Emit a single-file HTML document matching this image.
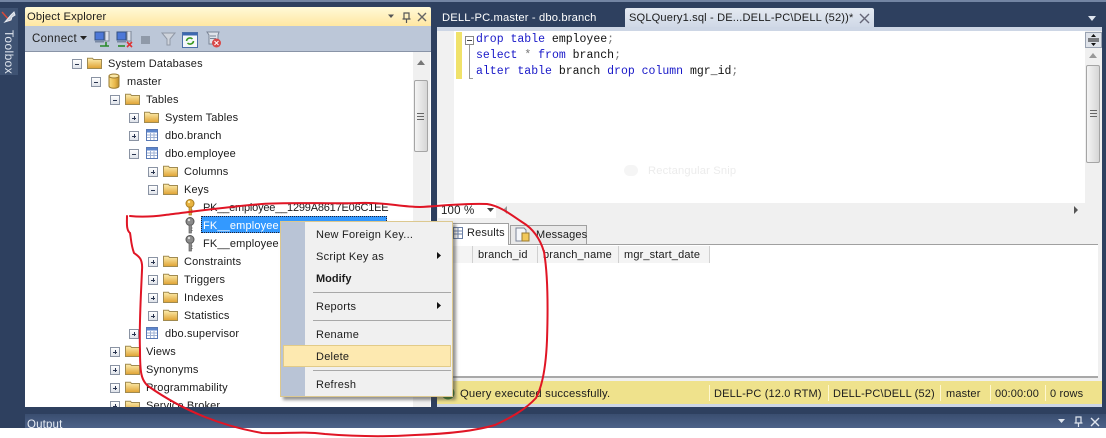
<!DOCTYPE html>
<html><head><meta charset="utf-8">
<style>
html,body{margin:0;padding:0}
body{width:1106px;height:438px;overflow:hidden;position:relative;background:#fff;font:11px/14px "Liberation Sans",sans-serif;color:#1c1c1c}
#a{position:absolute;left:0;top:0;width:1106px;height:428px;background:#2e405f;overflow:hidden;filter:blur(.3px)}
.b{position:absolute}
.t{position:absolute;white-space:nowrap;line-height:14px;letter-spacing:.15px;margin-top:1px}
.e{position:absolute;width:8px;height:8px;border:1px solid #8a93a3;background:linear-gradient(#fff,#dfe3ea);margin-top:1px}
.e:before{content:"";position:absolute;left:2px;top:3.500px;width:4px;height:1px;background:#2a3550}
.p:after{content:"";position:absolute;left:3.500px;top:2px;width:1px;height:4px;background:#2a3550}
svg.i{position:absolute;overflow:visible}
.m{position:absolute;white-space:nowrap;left:316px;line-height:14px;letter-spacing:.25px;margin-top:1px}
.s{position:absolute;left:313px;width:138px;height:1px;background:#a8a8a8}
.c{position:absolute;font:11.500px/14px "Liberation Mono",monospace;white-space:pre;left:476px;color:#111;margin-top:1px}
.k{color:#1818c8}.g{color:#777}
.h{position:absolute;top:246px;height:17px;line-height:19px;border-right:1px solid #d0d0d0;box-sizing:border-box;padding-left:5px;background:#f4f4f4;letter-spacing:.15px}
.v{position:absolute;top:385px;width:1px;height:16px;background:#fff8d0}
</style></head><body>
<svg width="0" height="0" style="position:absolute">
<defs>
<linearGradient id="fg" x1="0" y1="0" x2="0" y2="1"><stop offset="0" stop-color="#fdeeb0"/><stop offset="1" stop-color="#dfa232"/></linearGradient>
<linearGradient id="dg" x1="0" y1="0" x2="1" y2="0"><stop offset="0" stop-color="#f8dd85"/><stop offset=".6" stop-color="#e9b84a"/><stop offset="1" stop-color="#b88a2a"/></linearGradient>
<symbol id="f" viewBox="0 0 15 12"><path d="M.5 2.500V1.200h5l1 1.300h8V11.500H.5z" fill="url(#fg)" stroke="#a08a50"/></symbol>
<symbol id="tb" viewBox="0 0 12 12"><rect x=".5" y=".5" width="11" height="11" fill="#fff" stroke="#5878b4"/><rect x="1" y="1" width="10" height="2.500" fill="#5d86cc"/><path d="M1 6h10M1 8.500h10M4.500 4v7M8 4v7" stroke="#9fb2d4"/></symbol>
<symbol id="kg" viewBox="0 0 10 17"><circle cx="5" cy="4.500" r="4" fill="#8b8b8b" stroke="#555"/><circle cx="4" cy="3" r="1.200" fill="#ddd"/><path d="M4 8h2.500v8H4z" fill="#888" stroke="#666" stroke-width=".7"/><path d="M6 11h1.500M6 13.500h1.500" stroke="#666"/></symbol>
<symbol id="ky" viewBox="0 0 10 17"><circle cx="5" cy="4.500" r="4" fill="#e8b340" stroke="#a87d20"/><circle cx="4" cy="3" r="1.200" fill="#fff0b0"/><path d="M4 8h2.500v8H4z" fill="#d9a436" stroke="#a87d20" stroke-width=".7"/><path d="M6 11h1.500M6 13.500h1.500" stroke="#a87d20"/></symbol>
<symbol id="sv" viewBox="0 0 17 17"><rect x="1" y="1" width="9" height="8" fill="#4d78d8" stroke="#33507f"/><rect x="11" y="0" width="4" height="10" fill="#dde2ea" stroke="#7a8496"/><rect x="1" y="10" width="9" height="1.500" fill="#7a8aa5"/></symbol>
</defs>
</svg>
<div id="a">
<div class="b" style="left:0;top:0;width:1106px;height:2px;background:#7385a3"></div>

<!-- Toolbox -->
<div class="b" style="left:0;top:8px;width:18px;height:67px;background:#3f5373"></div>
<svg class="i" style="left:1px;top:10px" width="15" height="15"><path d="M1 2l8 9" stroke="#d84a3a" stroke-width="1.500"/><path d="M4 12l6-7 3-3 1 3-3 2-1 3z" fill="#c8ced8" stroke="#e8ecf2"/></svg>
<div class="t" style="left:0;top:29px;width:46px;color:#dfe5ee;font-size:12px;transform-origin:0 0;transform:translate(16px,0) rotate(90deg);letter-spacing:.4px">Toolbox</div>

<!-- Object Explorer -->
<div class="b" style="left:25px;top:7px;width:406px;height:19px;border-radius:2px 2px 0 0;background:linear-gradient(#fff9d8,#ffe7a2)"></div>
<div class="t" style="left:27px;top:9px;font-size:11.200px">Object Explorer</div>
<svg class="i" style="left:387px;top:12px" width="44" height="12"><path d="M1 2.500h6L4 6z" fill="#555"/><path d="M17 1h5v6h-5zM19.500 7v4M15.500 7h8" fill="none" stroke="#555" stroke-width="1.200"/><path d="M31 1l8 8M39 1l-8 8" stroke="#666" stroke-width="1.400"/></svg>
<div class="b" style="left:25px;top:26px;width:406px;height:26px;background:#bcc7d8;border-bottom:1px solid #8994a7;box-sizing:border-box"></div>
<div class="t" style="left:32px;top:31px;color:#222;font-size:11.500px;letter-spacing:.3px">Connect</div>
<svg class="i" style="left:80px;top:36px" width="7" height="5"><path d="M0 0h7L3.500 4z" fill="#222"/></svg>
<svg class="i" style="left:94px;top:31px" width="17" height="17"><use href="#sv"/><path d="M6 15h9M12 11v4" stroke="#2a8a2a" stroke-width="1.600" fill="none"/></svg>
<svg class="i" style="left:116px;top:31px" width="17" height="17"><use href="#sv"/><path d="M11 11l5 5M16 11l-5 5" stroke="#d33" stroke-width="1.600"/><path d="M2 15h7" stroke="#2a8a2a" stroke-width="1.600"/></svg>
<div class="b" style="left:141px;top:36px;width:9px;height:8px;background:#8f99a8"></div>
<svg class="i" style="left:161px;top:32px" width="15" height="14"><path d="M1 1h13L9 7v6H6V7z" fill="#cfd4dc" stroke="#9098a6"/></svg>
<svg class="i" style="left:182px;top:32px" width="16" height="16"><rect x=".5" y=".5" width="15" height="15" fill="#f5f7fa" stroke="#4a6fa8"/><rect x="1" y="1" width="14" height="2.500" fill="#3d68b0"/><path d="M4.500 9a3.500 3.500 0 016-2M11.500 9a3.500 3.500 0 01-6 2" fill="none" stroke="#3a9a20" stroke-width="1.600"/></svg>
<svg class="i" style="left:205px;top:31px" width="17" height="17"><path d="M2 1h12l-1 3v9H4V4z" fill="#dfe3ea" stroke="#7a8496"/><path d="M5 5h6M5 7.500h6" stroke="#7a8496"/><circle cx="11.500" cy="12" r="4.500" fill="#d84848"/><path d="M9.500 10l4 4M13.500 10l-4 4" stroke="#fff"/></svg>

<div class="b" style="left:25px;top:52px;width:406px;height:355px;background:#fff;overflow:hidden"></div>
<!-- tree rows -->
<div class="e" style="left:72px;top:58px"></div><svg class="i" style="left:87px;top:57px" width="15" height="12"><use href="#f"/></svg><div class="t" style="left:108px;top:56px">System Databases</div>
<div class="e" style="left:91px;top:76px"></div><svg class="i" style="left:108px;top:73px" width="12" height="16"><path d="M1 3v10c0 3 10 3 10 0V3z" fill="url(#dg)" stroke="#9a7a30"/><ellipse cx="6" cy="3" rx="5" ry="2" fill="#fbe8a8" stroke="#9a7a30"/></svg><div class="t" style="left:127px;top:74px">master</div>
<div class="e" style="left:110px;top:94px"></div><svg class="i" style="left:125px;top:93px" width="15" height="12"><use href="#f"/></svg><div class="t" style="left:146px;top:92px">Tables</div>
<div class="e p" style="left:129px;top:112px"></div><svg class="i" style="left:144px;top:111px" width="15" height="12"><use href="#f"/></svg><div class="t" style="left:165px;top:110px">System Tables</div>
<div class="e p" style="left:129px;top:130px"></div><svg class="i" style="left:146px;top:129px" width="12" height="12"><use href="#tb"/></svg><div class="t" style="left:165px;top:128px">dbo.branch</div>
<div class="e" style="left:129px;top:148px"></div><svg class="i" style="left:146px;top:147px" width="12" height="12"><use href="#tb"/></svg><div class="t" style="left:165px;top:146px">dbo.employee</div>
<div class="e p" style="left:148px;top:166px"></div><svg class="i" style="left:163px;top:165px" width="15" height="12"><use href="#f"/></svg><div class="t" style="left:184px;top:164px">Columns</div>
<div class="e" style="left:148px;top:184px"></div><svg class="i" style="left:163px;top:183px" width="15" height="12"><use href="#f"/></svg><div class="t" style="left:184px;top:182px">Keys</div>
<svg class="i" style="left:185px;top:199px" width="10" height="17"><use href="#ky"/></svg><div class="t" style="left:203px;top:200px;letter-spacing:-.2px">PK__employee__1299A8617E06C1EE</div>
<svg class="i" style="left:185px;top:217px" width="10" height="17"><use href="#kg"/></svg>
<div class="b" style="left:201px;top:216px;width:186px;height:17px;background:#3399ff;outline:1px dotted #223;outline-offset:-1px"></div><div class="t" style="left:203px;top:218px;color:#fff">FK__employee</div>
<svg class="i" style="left:185px;top:235px" width="10" height="17"><use href="#kg"/></svg><div class="t" style="left:203px;top:236px">FK__employee</div>
<div class="e p" style="left:148px;top:256px"></div><svg class="i" style="left:163px;top:255px" width="15" height="12"><use href="#f"/></svg><div class="t" style="left:184px;top:254px">Constraints</div>
<div class="e p" style="left:148px;top:274px"></div><svg class="i" style="left:163px;top:273px" width="15" height="12"><use href="#f"/></svg><div class="t" style="left:184px;top:272px">Triggers</div>
<div class="e p" style="left:148px;top:292px"></div><svg class="i" style="left:163px;top:291px" width="15" height="12"><use href="#f"/></svg><div class="t" style="left:184px;top:290px">Indexes</div>
<div class="e p" style="left:148px;top:310px"></div><svg class="i" style="left:163px;top:309px" width="15" height="12"><use href="#f"/></svg><div class="t" style="left:184px;top:308px">Statistics</div>
<div class="e p" style="left:129px;top:328px"></div><svg class="i" style="left:146px;top:327px" width="12" height="12"><use href="#tb"/></svg><div class="t" style="left:165px;top:326px">dbo.supervisor</div>
<div class="e p" style="left:110px;top:346px"></div><svg class="i" style="left:125px;top:345px" width="15" height="12"><use href="#f"/></svg><div class="t" style="left:146px;top:344px">Views</div>
<div class="e p" style="left:110px;top:364px"></div><svg class="i" style="left:125px;top:363px" width="15" height="12"><use href="#f"/></svg><div class="t" style="left:146px;top:362px">Synonyms</div>
<div class="e p" style="left:110px;top:382px"></div><svg class="i" style="left:125px;top:381px" width="15" height="12"><use href="#f"/></svg><div class="t" style="left:146px;top:380px">Programmability</div>
<div class="b" style="left:25px;top:400px;width:388px;height:7px;overflow:hidden"><div class="e p" style="left:85px;top:0"></div><svg class="i" style="left:100px;top:0" width="15" height="12"><use href="#f"/></svg><div class="t" style="left:121px;top:-2px">Service Broker</div></div>
<!-- tree scrollbar -->
<div class="b" style="left:413px;top:52px;width:17px;height:355px;background:#f0f0f0"></div>
<svg class="i" style="left:417px;top:60px" width="9" height="6"><path d="M0 5h8L4 0z" fill="#777"/></svg>
<div class="b" style="left:414px;top:80px;width:14px;height:72px;border:1px solid #a5a5a5;border-radius:2px;box-sizing:border-box;background:linear-gradient(90deg,#f4f4f4,#d6d6d6)"></div>
<div class="b" style="left:417px;top:113px;width:7px;height:8px;background:repeating-linear-gradient(#666 0 1px,transparent 1px 3px)"></div>
<!-- Editor tabs -->
<div class="t" style="left:442px;top:10px;color:#fff;font-size:11.200px">DELL-PC.master - dbo.branch</div>
<div class="b" style="left:625px;top:8px;width:249px;height:19px;border-radius:2px 2px 0 0;background:linear-gradient(#e4e9f1,#cfd8e6)"></div>
<div class="t" style="left:629px;top:10px;font-size:11.100px">SQLQuery1.sql - DE...DELL-PC\DELL (52))*</div>
<svg class="i" style="left:860px;top:14px" width="10" height="10"><path d="M0 0l9 9M9 0L0 9" stroke="#667" stroke-width="1.400"/></svg>
<svg class="i" style="left:1088px;top:16px" width="9" height="7"><path d="M0 0h8L4 5z" fill="#dfe5ee"/></svg>
<!-- Editor -->
<div class="b" style="left:437px;top:27px;width:665px;height:4px;background:#cdd6e5"></div>
<div class="b" style="left:437px;top:31px;width:665px;height:172px;background:#fff"></div>
<div class="b" style="left:437px;top:31px;width:17px;height:172px;background:#f1f1f1"></div>
<div class="b" style="left:456px;top:32px;width:6px;height:47px;background:#f0e26a"></div>
<div class="b" style="left:465px;top:36px;width:7px;height:7px;border:1px solid #888;background:#fff"></div>
<div class="b" style="left:467px;top:40px;width:5px;height:1px;background:#444"></div>
<div class="b" style="left:469px;top:45px;width:1px;height:33px;background:#999"></div>
<div class="b" style="left:469px;top:78px;width:4px;height:1px;background:#999"></div>
<div class="c" style="top:32px"><span class="k">drop table</span> employee<span class="g">;</span></div>
<div class="c" style="top:48px"><span class="k">select</span> <span class="g">*</span> <span class="k">from</span> branch<span class="g">;</span></div>
<div class="c" style="top:64px"><span class="k">alter table</span> branch <span class="k">drop column</span> mgr_id<span class="g">;</span></div>
<div class="t" style="left:648px;top:163px;color:#ececec;font-size:11.200px">Rectangular Snip</div>
<div class="b" style="left:624px;top:165px;width:14px;height:11px;background:#f5f5f5;border-radius:6px"></div>
<!-- editor vscroll -->
<div class="b" style="left:1085px;top:31px;width:17px;height:172px;background:#f0f0f0"></div>
<div class="b" style="left:1085px;top:32px;width:17px;height:16px;background:#dfe3ea;border:1px solid #9aa3b2;box-sizing:border-box"></div>
<svg class="i" style="left:1088px;top:33px" width="11" height="14"><path d="M0 6h11M0 8h11" stroke="#111"/><path d="M3 4l2.500-3L8 4zM3 10l2.500 3L8 10z" fill="#111"/></svg>
<svg class="i" style="left:1089px;top:53px" width="8" height="5"><path d="M0 5h8L4 0z" fill="#999"/></svg>
<div class="b" style="left:1086px;top:65px;width:14px;height:98px;border:1px solid #a5a5a5;border-radius:2px;box-sizing:border-box;background:linear-gradient(90deg,#f4f4f4,#d6d6d6)"></div>
<div class="b" style="left:1090px;top:110px;width:7px;height:8px;background:repeating-linear-gradient(#666 0 1px,transparent 1px 3px)"></div>
<!-- hscroll -->
<div class="b" style="left:437px;top:203px;width:665px;height:15px;background:#f0f0f0"></div>
<div class="b" style="left:438px;top:203px;width:58px;height:15px;background:#fff"></div>
<div class="t" style="left:441px;top:203px;font-size:11.500px">100 %</div>
<svg class="i" style="left:487px;top:208px" width="8" height="5"><path d="M0 0h7L3.500 4z" fill="#444"/></svg>
<svg class="i" style="left:503px;top:206px" width="5" height="8"><path d="M4 0v8L0 4z" fill="#999"/></svg>
<svg class="i" style="left:1074px;top:206px" width="5" height="8"><path d="M0 0v8l4-4z" fill="#555"/></svg>
<!-- results -->
<div class="b" style="left:437px;top:218px;width:665px;height:163px;background:#f0f0f0"></div>
<div class="b" style="left:510px;top:225px;width:77px;height:19px;background:#e9e9e9;border:1px solid #a0a0a0;box-sizing:border-box;border-bottom:0"></div>
<div class="b" style="left:440px;top:244px;width:658px;height:1px;background:#a0a0a0"></div>
<div class="b" style="left:450px;top:223px;width:59px;height:22px;background:#fff;border:1px solid #a0a0a0;box-sizing:border-box;border-bottom:0"></div>
<svg class="i" style="left:453px;top:227px" width="10" height="12"><rect x=".5" y=".5" width="9" height="11" fill="#fff" stroke="#6a7fa5"/><path d="M1 4h8M1 7h8M5 1v10" stroke="#6a7fa5"/></svg>
<div class="t" style="left:467px;top:225px">Results</div>
<svg class="i" style="left:515px;top:227px" width="15" height="15"><path d="M1 1h8l2 2v11H1z" fill="#f4f6fa" stroke="#7a8496"/><rect x="7" y="6" width="7" height="8" fill="#f2c85a" stroke="#9a7a30"/></svg>
<div class="t" style="left:536px;top:227px">Messages</div>
<div class="b" style="left:440px;top:245px;width:658px;height:133px;background:#fff;border-bottom:2px solid #a8a8a8;box-sizing:border-box"></div>
<div class="h" style="left:440px;width:33px"></div>
<div class="h" style="left:473px;width:65px">branch_id</div>
<div class="h" style="left:538px;width:81px">branch_name</div>
<div class="h" style="left:619px;width:91px">mgr_start_date</div>
<!-- status -->
<div class="b" style="left:437px;top:381px;width:665px;height:23px;background:#efe28c"></div>
<div class="b" style="left:437px;top:404px;width:665px;height:3px;background:#cdd6e5"></div>
<svg class="i" style="left:441px;top:386px" width="14" height="14"><circle cx="7" cy="7" r="6.500" fill="#3d8a2a"/><path d="M3.500 7l2.500 3 4.500-5" stroke="#d8f0c8" fill="none" stroke-width="1.300"/></svg>
<div class="t" style="left:460px;top:386px;font-size:11.300px">Query executed successfully.</div>
<div class="v" style="left:709px"></div><div class="v" style="left:828px"></div><div class="v" style="left:940px"></div><div class="v" style="left:990px"></div><div class="v" style="left:1045px"></div>
<div class="t" style="left:714px;top:386px">DELL-PC (12.0 RTM)</div>
<div class="t" style="left:833px;top:386px">DELL-PC\DELL (52)</div>
<div class="t" style="left:946px;top:386px">master</div>
<div class="t" style="left:995px;top:386px">00:00:00</div>
<div class="t" style="left:1050px;top:386px">0 rows</div>
<!-- Output -->
<div class="b" style="left:25px;top:414px;width:1081px;height:14px;background:linear-gradient(#3a4e70,#4d6288)"></div>
<div class="t" style="left:27px;top:417px;color:#e8edf4;font-size:11.500px">Output</div>
<svg class="i" style="left:1058px;top:416px" width="44" height="12"><path d="M0 3h7L3.500 7z" fill="#dfe5ee"/><path d="M18 1h5v6h-5zM20.500 7v4M16.500 7h8" fill="none" stroke="#dfe5ee" stroke-width="1.200"/><path d="M33 2l8 8M41 2l-8 8" stroke="#dfe5ee" stroke-width="1.400"/></svg>
<!-- context menu -->
<div class="b" style="left:280px;top:221px;width:173px;height:176px;background:#f0f0f0;border:1px solid #dcc88f;box-sizing:border-box;box-shadow:3px 3px 3px rgba(60,60,60,.55)"></div>
<div class="b" style="left:281px;top:222px;width:24px;height:174px;background:#b9c4d6"></div>
<div class="b" style="left:283px;top:345px;width:168px;height:22px;background:#fde9b0;border:1px solid #e2cb88;box-sizing:border-box"></div>
<div class="m" style="top:227px">New Foreign Key...</div>
<div class="m" style="top:249px">Script Key as</div>
<div class="m" style="top:271px;font-weight:bold;letter-spacing:0">Modify</div>
<div class="s" style="top:292px"></div>
<div class="m" style="top:299px">Reports</div>
<div class="s" style="top:320px"></div>
<div class="m" style="top:327px">Rename</div>
<div class="m" style="top:349px">Delete</div>
<div class="s" style="top:370px"></div>
<div class="m" style="top:377px">Refresh</div>
<svg class="i" style="left:437px;top:252px" width="5" height="8"><path d="M0 0v7l4-3.500z" fill="#111"/></svg>
<svg class="i" style="left:437px;top:302px" width="5" height="8"><path d="M0 0v7l4-3.500z" fill="#111"/></svg>
</div>
<!-- red annotation -->
<svg class="i" style="left:0;top:0;filter:blur(.2px)" width="1106" height="438"><path d="M130 216C140 217 150 217 165 215C190 212 225 207 262 204C290 202 330 204 360 203C385 202 400 207 420 207C440 206 465 203 487 204C500 206 510 214 522 222C532 228 540 238 544 252C548 275 548 310 547 340C546 365 543 385 536 398C525 410 510 418 495 425C475 431 445 434 415 435C385 437 350 436 325 434C300 431 285 434 262 433C245 430 225 425 205 417C185 409 165 398 148 386C141 380 140 372 140 350C139 325 141 295 142 270C143 258 138 256 134 253C131 245 131 238 130 233C126 230 127 222 127 216" fill="none" stroke="#e01525" stroke-width="2" stroke-linecap="round"/></svg>
</body></html>
